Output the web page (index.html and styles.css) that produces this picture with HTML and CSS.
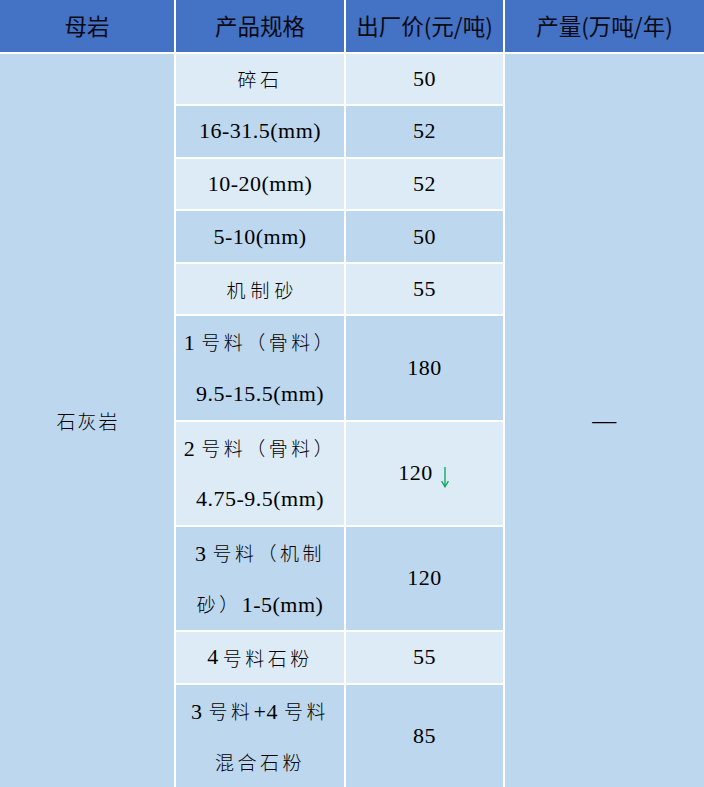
FILE: index.html
```html
<!DOCTYPE html>
<html lang="zh-CN">
<head>
<meta charset="utf-8">
<title>石灰岩产品价格</title>
<link rel="stylesheet" href="styles.css">
</head>
<body>
<div class="grid">
  <div class="hd">母岩</div>
  <div class="hd">产品规格</div>
  <div class="hd">出厂价(元/吨)</div>
  <div class="hd">产量(万吨/年)</div>

  <div class="cell dark rock"><span class="cn">石灰岩</span></div>
  <div class="cell dark output"><span class="dash">—</span></div>

  <div class="cell light"><span class="cn">碎石</span></div>
  <div class="cell light">50</div>

  <div class="cell dark">16-31.5(mm)</div>
  <div class="cell dark">52</div>

  <div class="cell light">10-20(mm)</div>
  <div class="cell light">52</div>

  <div class="cell dark">5-10(mm)</div>
  <div class="cell dark">50</div>

  <div class="cell light"><span class="cn wide">机制砂</span></div>
  <div class="cell light">55</div>

  <div class="cell dark two">
    <div class="line">1 <span class="cn">号料（骨料）</span></div>
    <div class="line">9.5-15.5(mm)</div>
  </div>
  <div class="cell dark">180</div>

  <div class="cell light two">
    <div class="line">2 <span class="cn">号料（骨料）</span></div>
    <div class="line">4.75-9.5(mm)</div>
  </div>
  <div class="cell light"><div class="price">120<svg class="arrow" width="12" height="22" viewBox="0 0 12 22"><path d="M6 1 V20" fill="none" stroke="#00a859" stroke-width="1.3"/><path d="M2.6 15.2 L6 20.8 L9.4 15.2" fill="none" stroke="#00a859" stroke-width="1.3"/></svg></div></div>

  <div class="cell dark two">
    <div class="line">3 <span class="cn">号料（机制</span></div>
    <div class="line"><span class="cn">砂）</span>1-5(mm)</div>
  </div>
  <div class="cell dark">120</div>

  <div class="cell light"><div class="single">4 <span class="cn">号料石粉</span></div></div>
  <div class="cell light">55</div>

  <div class="cell dark two">
    <div class="line">3 <span class="cn">号料</span>+4 <span class="cn">号料</span></div>
    <div class="line"><span class="cn">混合石粉</span></div>
  </div>
  <div class="cell dark">85</div>
</div>
</body>
</html>
```

FILE: styles.css
```css
html, body {
  margin: 0;
  padding: 0;
  background: #ffffff;
  overflow: hidden;
}

.grid {
  display: grid;
  width: 704px;
  grid-template-columns: 174px 168px 157px 199px;
  grid-template-rows: 51.5px 50.6px 50.6px 50.6px 50.6px 50.6px 103.2px 103.2px 103.2px 50.6px 103.2px;
  gap: 2px;
  background: #ffffff;
}

.hd {
  background: #4472c4;
  color: #0a0a14;
  font-family: "Noto Sans CJK SC", "Noto Sans", sans-serif;
  font-size: 22.5px;
  display: flex;
  align-items: center;
  justify-content: center;
  padding-bottom: 1px;
  white-space: nowrap;
}

.cell {
  display: flex;
  flex-direction: column;
  align-items: center;
  justify-content: center;
  font-family: "Liberation Serif", "Noto Sans CJK SC", serif;
  font-size: 22px;
  letter-spacing: 0.5px;
  color: #000000;
  white-space: nowrap;
}

.cell.two {
  justify-content: flex-start;
}

.line {
  height: 51.6px;
  line-height: 51.6px;
}

.single,
.price {
  display: flex;
  align-items: center;
}

.light {
  background: #ddebf7;
}

.dark {
  background: #bdd7ee;
}

.rock {
  grid-column: 1;
  grid-row: 2 / span 10;
}

.output {
  grid-column: 4;
  grid-row: 2 / span 10;
}

.cn {
  font-family: "Noto Sans CJK SC", sans-serif;
  font-size: 19px;
  font-weight: 300;
  letter-spacing: 3.5px;
}

.single .cn {
  margin-left: 4px;
}

.cn.wide {
  letter-spacing: 5px;
  margin-right: -5px;
}

.rock .cn {
  letter-spacing: 2px;
  margin-right: -2px;
}

.arrow {
  margin-left: 6px;
  margin-top: 7px;
}

.dash {
  font-size: 24px;
}
```
